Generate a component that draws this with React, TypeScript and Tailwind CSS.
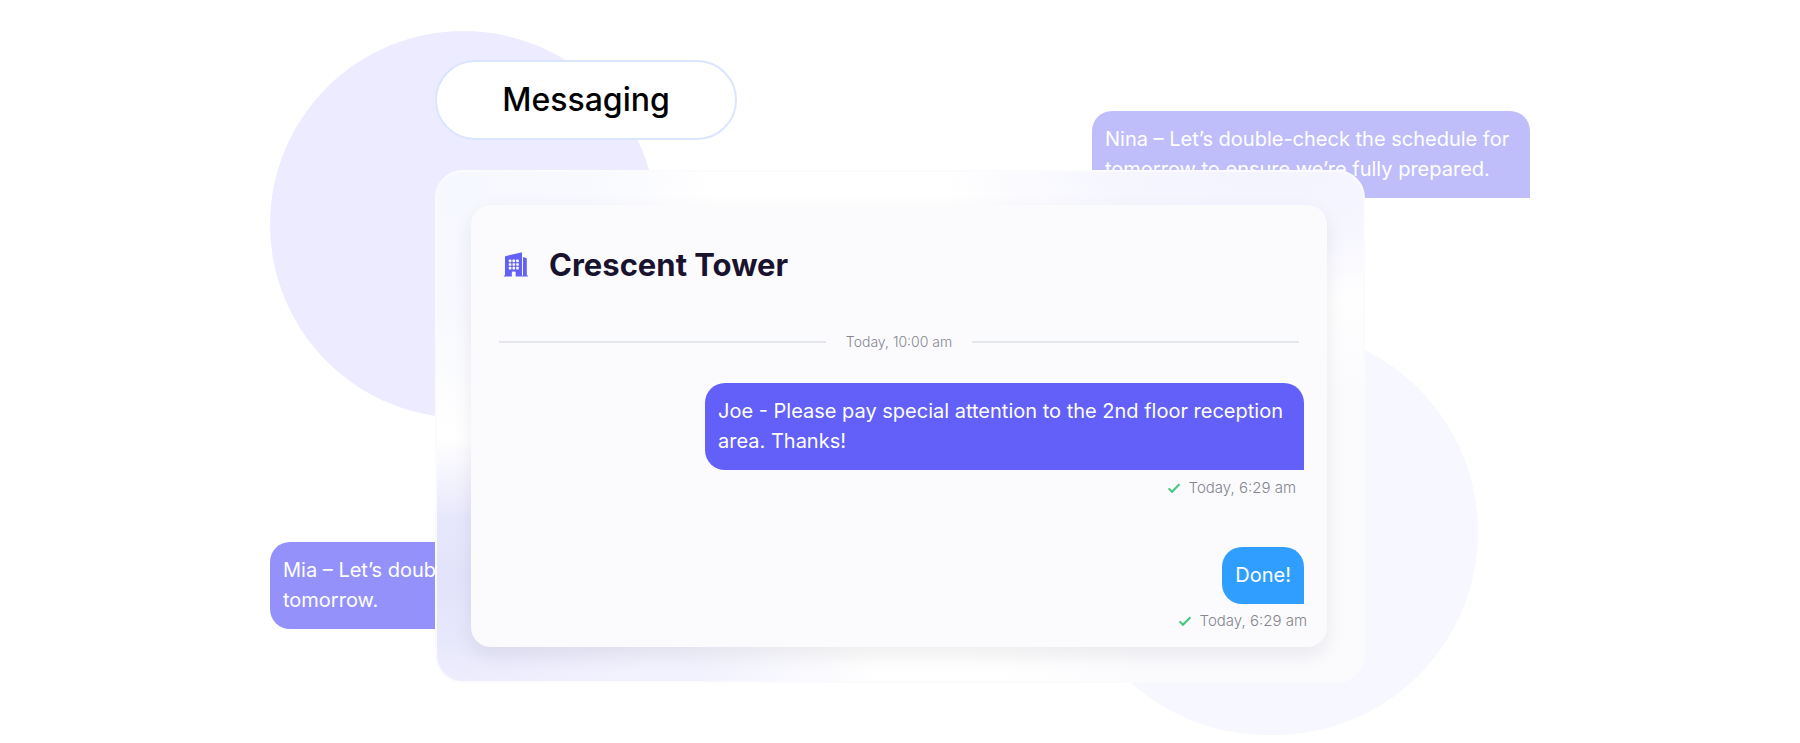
import type { ReactNode } from "react";

function Bubble({ className, children }: { className: string; children: ReactNode }) {
  return (
    <p className={`px-[13px] pt-[13px] pb-[14px] text-[20px] leading-[30px] text-white ${className}`}>
      {children}
    </p>
  );
}

function Check() {
  return (
    <svg viewBox="0 0 14 12" className="h-3 w-3.5" aria-hidden="true">
      <path d="M1.6 6.4 5 9.8 12.4 2.2" fill="none" stroke="#43c77c" strokeWidth="2" />
    </svg>
  );
}

function Sent({ className }: { className: string }) {
  return (
    <div className={`flex items-center gap-2 self-end text-[15px] leading-5 font-light text-[#85868f] ${className}`}>
      <Check />
      <time>Today, 6:29 am</time>
    </div>
  );
}

function Building() {
  return (
    <svg viewBox="0 0 26 26" className="size-[26px]" aria-hidden="true">
      <g fill="#6260f7">
        <path d="M2.4 4.2 18.2.4Q19 .2 19 1V24H12.7V20.7a1.2 1.2 0 0 0-1.2-1.2H10a1.2 1.2 0 0 0-1.2 1.2V24H2V4.8Q2 4.3 2.4 4.2Z" />
        <path d="M20 5 23.2 6Q23.8 6.2 23.8 6.8V24H20Z" />
        <path d="M1 23.4H8.8V24.6H1ZM12.7 23.4H25V24.6H12.7Z" />
      </g>
      <g fill="#fbfbfe">
        {[7.6, 11.2, 14.8].map((y) =>
          [5.8, 9.5, 13.2].map((x) => (
            <rect key={`${x}-${y}`} x={x} y={y} width="2.6" height="2.6" rx=".6" />
          )),
        )}
      </g>
    </svg>
  );
}

export default function App() {
  return (
    <main className="overflow-hidden bg-white px-6 pt-[60px] pb-[61px] font-['Inter','DejaVu_Sans',sans-serif]">
      <div className="relative mx-auto max-w-[930px]">
        <div className="absolute -top-[29px] -left-[165px] size-[387px] rounded-full bg-[#edebff]" />
        <div className="absolute top-[269px] -right-[113px] h-[406px] w-[414px] rounded-full bg-[#f7f7ff]" />
        <Bubble className="absolute top-[51px] -right-[165px] w-[438px] rounded-t-[20px] bg-[#bfbefb]">
          Nina – Let’s double-check the schedule for tomorrow to ensure we’re fully prepared.
        </Bubble>
        <Bubble className="absolute top-[482px] -left-[165px] w-[438px] rounded-l-[20px] bg-[#9492fa]">
          Mia – Let’s double-check the schedule for tomorrow.
        </Bubble>

        <h1 className="relative flex h-20 w-[302px] items-center justify-center rounded-full border-2 border-[#dce5ff] bg-white text-[32px] leading-none font-medium text-black">
          Messaging
        </h1>

        <section className="relative mt-[30px] rounded-[28px] border-2 border-[#fbfbfe] bg-white bg-[radial-gradient(ellipse_260px_140px_at_0%_80%,#e2e2fb_0%,#e8e8fc_45%,#e8e8fc00_100%),radial-gradient(ellipse_350px_100px_at_10%_100%,#f2f2fe_0%,#f2f2fe_50%,#f2f2fe00_100%),radial-gradient(ellipse_280px_260px_at_0%_0%,#f6f8ff_0%,#f8f9ff_55%,#f8f9ff00_100%),radial-gradient(ellipse_330px_130px_at_90%_0%,#f3f4ff_0%,#f6f6ff_50%,#f6f6ff00_100%),radial-gradient(ellipse_400px_300px_at_100%_80%,#fbfbfe_0%,#fbfbfe_60%,#fbfbfe00_100%)] pt-[33px] pr-[36px] pb-[34px] pl-[34px]">
          <div className="flex flex-col rounded-[20px] bg-[#fbfbfe] px-[28px] pt-[38px] pb-4 shadow-[0_8px_20px_rgba(30,20,40,0.08)]">
            <header className="flex items-center gap-5 pl-1">
              <Building />
              <h2 className="text-[31px] leading-[44px] font-bold text-[#19132f]">Crescent Tower</h2>
            </header>
            <div className="mt-[45px] flex items-center gap-5 text-[14px] leading-5 font-light text-[#85868f]">
              <span className="h-0.5 flex-1 bg-[#e3e6ea]" />
              <time>Today, 10:00 am</time>
              <span className="h-0.5 flex-1 bg-[#e3e6ea]" />
            </div>
            <Bubble className="mt-[31px] -mr-[5px] max-w-[599px] self-end rounded-t-[20px] rounded-bl-[20px] bg-[#6260f9]">
              Joe - Please pay special attention to the 2nd floor reception area. Thanks!
            </Bubble>
            <Sent className="mt-2 mr-[3px]" />
            <Bubble className="mt-[49px] -mr-[5px] self-end rounded-t-[20px] rounded-bl-[20px] bg-[#309eff]">Done!</Bubble>
            <Sent className="mt-[7px] -mr-2" />
          </div>
        </section>
      </div>
    </main>
  );
}
